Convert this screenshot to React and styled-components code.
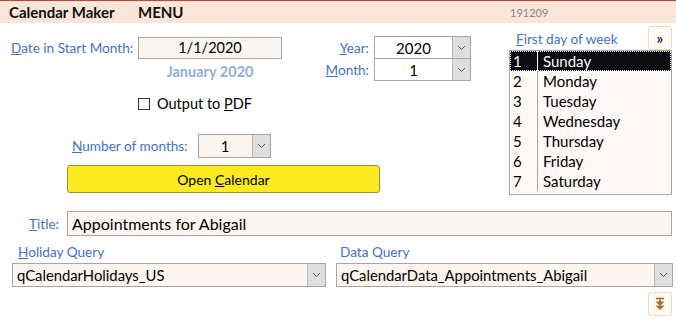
import styled, { createGlobalStyle } from "styled-components";

const GlobalStyle = createGlobalStyle`
    body {
        margin: 0;
        background: #ffffff;
        font-family: Lato, "Open Sans", sans-serif;
    }
`;

const Page = styled.div`
    width: 676px;
    height: 323px;
    overflow: hidden;
    background: #ffffff;
`;

const Header = styled.div`
    height: 22px;
    border-top: 1px solid #b04a40;
    background: #fbe5d7;
    display: flex;
    align-items: center;
    padding-left: 9px;
`;

const AppTitle = styled.span`
    width: ${(p) => p.$w}px;
    font-weight: 700;
    font-size: 15px;
    color: #111;
`;

const Version = styled.span`
    font-size: 11px;
    color: #888;
`;

const Body = styled.div`
    padding: 0 4px 0 11px;
`;

const Top = styled.div`
    display: flex;
    justify-content: space-between;
    padding-top: 4px;
`;

const LeftCol = styled.div`
    display: flex;
    flex-direction: column;
    padding-top: 9px;
`;

const FirstRow = styled.div`
    display: flex;
    gap: 37px;
`;

const DateBlock = styled.div`
    display: grid;
    grid-template-columns: 127px 144px;
    align-items: center;
`;

const Label = styled.label`
    font-size: 13.6px;
    color: #4472c4;
    white-space: nowrap;
    text-align: ${(p) => p.$align || "left"};
    padding-left: ${(p) => p.$indent || 0}px;

    u {
        text-decoration: underline;
    }
`;

const TextBox = styled.div`
    height: ${(p) => p.$h || 20}px;
    border: 1px solid #a6a6a6;
    background: ${(p) => (p.$white ? "#ffffff" : "#fdf5ef")};
    font-size: ${(p) => p.$size || 15}px;
    color: #000;
    display: flex;
    align-items: center;
    justify-content: ${(p) => (p.$center ? "center" : "flex-start")};
    padding-left: ${(p) => (p.$center ? 0 : 4)}px;
    white-space: nowrap;
`;

const Caption = styled.div`
    grid-column: 2;
    text-align: center;
    font-weight: 700;
    font-size: 14.5px;
    color: #93aed0;
    margin-top: 3px;
`;

const YearMonth = styled.div`
    display: grid;
    grid-template-columns: 50px 96px;
    column-gap: 5px;
    align-items: center;
`;

const Combo = styled.div`
    display: flex;
    width: ${(p) => p.$w}px;
    height: ${(p) => p.$h || 21}px;
    border: 1px solid #a6a6a6;
    margin-top: ${(p) => (p.$joined ? -1 : 0)}px;
    background: ${(p) => (p.$white ? "#ffffff" : "#fdf5ef")};
    box-sizing: border-box;
`;

const ComboText = styled.div`
    flex: 1;
    display: flex;
    align-items: center;
    justify-content: ${(p) => (p.$center ? "center" : "flex-start")};
    padding-left: ${(p) => (p.$center ? 0 : 4)}px;
    font-size: ${(p) => p.$size || 15}px;
    color: #000;
    white-space: nowrap;
`;

const ArrowBox = styled.div`
    width: 17px;
    background: #dedede;
    border-left: 1px solid #b8b8b8;
    display: flex;
    align-items: center;
    justify-content: center;
`;

const CheckRow = styled.div`
    display: flex;
    align-items: center;
    gap: 7px;
    margin: 14px 0 0 127px;
    font-size: 14.5px;
    color: #000;
`;

const CheckBox = styled.span`
    width: 10px;
    height: 10px;
    border: 1px solid #333;
    background: #fff;
`;

const MonthsRow = styled.div`
    display: flex;
    align-items: center;
    gap: 10px;
    margin: 22px 0 0 61px;
`;

const OpenButton = styled.button`
    margin: 7px 0 0 56px;
    width: 313px;
    height: 28px;
    background: #fdeb1f;
    border: 1px solid #a08a3a;
    border-radius: 3px;
    font-family: inherit;
    font-size: 14px;
    color: #000;
    padding: 0;
`;

const RightCol = styled.div`
    width: 163px;
    display: flex;
    flex-direction: column;
`;

const ListHead = styled.div`
    display: flex;
    justify-content: space-between;
    align-items: flex-end;
    height: 23px;
`;

const SmallButton = styled.button`
    width: 24px;
    height: 24px;
    padding: 0;
    background: #fffaf5;
    border: 1px solid #f5d7b8;
    border-radius: 3px;
    display: flex;
    align-items: center;
    justify-content: center;
    font-family: inherit;
    font-weight: 700;
    font-size: 15px;
    color: #1f2d55;
`;

const ListBox = styled.div`
    border: 1px solid #a6a6a6;
    background: #fdf8f5;
    padding-bottom: 3px;
`;

const ListRow = styled.div`
    display: grid;
    grid-template-columns: 28px 1fr;
    height: 20px;
    align-items: center;
    font-size: 15px;
    background: ${(p) => (p.$selected ? "#0a0a0f" : "transparent")};
    color: ${(p) => (p.$selected ? "#ffffff" : "#000000")};
    outline: ${(p) => (p.$selected ? "1px dotted #ffffff" : "none")};
    outline-offset: -1px;

    span:first-child {
        padding-left: 3px;
        border-right: 1px solid ${(p) => (p.$selected ? "#ffffff" : "#a6a6a6")};
        height: 100%;
        display: flex;
        align-items: center;
    }
    span:last-child {
        padding-left: 5px;
    }
`;

const TitleRow = styled.div`
    display: grid;
    grid-template-columns: 48px 1fr;
    column-gap: 8px;
    align-items: center;
    margin-top: 16px;
`;

const Queries = styled.div`
    display: grid;
    grid-template-columns: 314px 337px;
    column-gap: 10px;
    margin-top: 8px;
    padding-left: 1px;
`;

const QueryCol = styled.div`
    display: flex;
    flex-direction: column;
    gap: 3px;
`;

const BottomRow = styled.div`
    display: flex;
    justify-content: flex-end;
    margin-top: 5px;
`;

const Chevron = () => (
    <svg width="9" height="6" viewBox="0 0 9 6">
        <polyline points="1,1 4.5,4.5 8,1" fill="none" stroke="#555" strokeWidth="1" />
    </svg>
);

const DropCombo = ({ w, value, center, white, size, joined, h }) => (
    <Combo $w={w} $white={white} $joined={joined} $h={h}>
        <ComboText $center={center} $size={size}>{value}</ComboText>
        <ArrowBox><Chevron /></ArrowBox>
    </Combo>
);

const days = ["Sunday", "Monday", "Tuesday", "Wednesday", "Thursday", "Friday", "Saturday"];

export default function App() {
    return (
        <Page>
            <GlobalStyle />
            <Header>
                <AppTitle $w={129}>Calendar Maker</AppTitle>
                <AppTitle $w={372}>MENU</AppTitle>
                <Version>191209</Version>
            </Header>
            <Body>
                <Top>
                    <LeftCol>
                        <FirstRow>
                            <DateBlock>
                                <Label><u>D</u>ate in Start Month:</Label>
                                <TextBox $center $size={14.5}>1/1/2020</TextBox>
                                <Caption>January 2020</Caption>
                            </DateBlock>
                            <YearMonth>
                                <Label $align="right"><u>Y</u>ear:</Label>
                                <DropCombo w={97} h={23} value="2020" center white />
                                <Label $align="right"><u>M</u>onth:</Label>
                                <DropCombo w={97} h={23} value="1" center white joined />
                            </YearMonth>
                        </FirstRow>
                        <CheckRow>
                            <CheckBox />
                            <span>Output to <u>P</u>DF</span>
                        </CheckRow>
                        <MonthsRow>
                            <Label><u>N</u>umber of months:</Label>
                            <DropCombo w={73} h={24} value="1" center />
                        </MonthsRow>
                        <OpenButton>Open <u>C</u>alendar</OpenButton>
                    </LeftCol>
                    <RightCol>
                        <ListHead>
                            <Label $indent={7} style={{ paddingBottom: 3 }}><u>F</u>irst day of week</Label>
                            <SmallButton>»</SmallButton>
                        </ListHead>
                        <ListBox>
                            {days.map((d, i) => (
                                <ListRow key={d} $selected={i === 0}>
                                    <span>{i + 1}</span>
                                    <span>{d}</span>
                                </ListRow>
                            ))}
                        </ListBox>
                    </RightCol>
                </Top>
                <TitleRow>
                    <Label $align="right"><u>T</u>itle:</Label>
                    <TextBox $size={16} $h={23}>Appointments for Abigail</TextBox>
                </TitleRow>
                <Queries>
                    <QueryCol>
                        <Label $indent={6}><u>H</u>oliday Query</Label>
                        <DropCombo w={314} h={24} value="qCalendarHolidays_US" size={14.8} />
                    </QueryCol>
                    <QueryCol>
                        <Label $indent={4}>Data Query</Label>
                        <DropCombo w={337} h={24} value="qCalendarData_Appointments_Abigail" size={14.8} />
                    </QueryCol>
                </Queries>
                <BottomRow>
                    <SmallButton>
                        <svg width="12" height="14" viewBox="0 0 12 14">
                            <line x1="2" y1="1.5" x2="10" y2="1.5" stroke="#b06a25" strokeWidth="1.6" />
                            <line x1="6" y1="1.5" x2="6" y2="6" stroke="#b06a25" strokeWidth="1.6" />
                            <polygon points="1.5,4.5 10.5,4.5 6,9" fill="#b06a25" />
                            <polygon points="1.5,8.5 10.5,8.5 6,13" fill="#b06a25" />
                        </svg>
                    </SmallButton>
                </BottomRow>
            </Body>
        </Page>
    );
}
